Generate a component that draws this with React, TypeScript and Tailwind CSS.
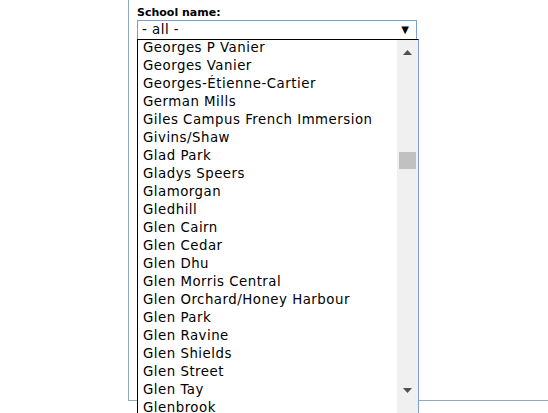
const schools = [
  "Georges P Vanier",
  "Georges Vanier",
  "Georges-Étienne-Cartier",
  "German Mills",
  "Giles Campus French Immersion",
  "Givins/Shaw",
  "Glad Park",
  "Gladys Speers",
  "Glamorgan",
  "Gledhill",
  "Glen Cairn",
  "Glen Cedar",
  "Glen Dhu",
  "Glen Morris Central",
  "Glen Orchard/Honey Harbour",
  "Glen Park",
  "Glen Ravine",
  "Glen Shields",
  "Glen Street",
  "Glen Tay",
  "Glenbrook",
];

const font = { fontFamily: '"DejaVu Sans", Verdana, sans-serif' };

function Arrow({ up }: { up?: boolean }) {
  return (
    <svg width="9" height="5" viewBox="0 0 9 5" className="block">
      <path d={up ? "M0 5 L4.5 0 L9 5 Z" : "M0 0 L9 0 L4.5 5 Z"} fill="#505050" />
    </svg>
  );
}

export default function App() {
  return (
    <div className="relative w-[548px] h-[413px] overflow-hidden bg-white" style={font}>
      <div className="ml-[128px] h-[401px] border-l border-b border-[#8ea9c1] pl-2">
        <label className="block pt-[6px] text-[11px] leading-[14px] font-bold text-black">
          School name:
        </label>
        <div className="flex h-[20px] w-[280px] items-center justify-between border border-[#7b9fd6] pl-[4px] pr-[7px]">
          <span className="text-[13.33px] leading-[16px] tracking-[0.5px] text-black">- all -</span>
          <span className="text-[10px] leading-none text-black">▼</span>
        </div>
      </div>

      {/* open options list */}
      <div className="absolute left-[137px] top-[39px] flex h-[374px] w-[282px] border-l border-t border-r border-black border-r-[#7b9fd6] bg-white">
        <div className="flex-1 overflow-hidden">
          <ul className="-mt-[1px] pl-[5px]">
            {schools.map((s) => (
              <li
                key={s}
                className="h-[18px] text-[13.33px] leading-[18px] tracking-[0.5px] text-black whitespace-nowrap"
              >
                {s}
              </li>
            ))}
          </ul>
        </div>
        <div className="flex w-[21px] flex-col bg-[#f0f0f0] pb-[13px]">
          <div className="flex h-[24px] items-center justify-center">
            <Arrow up />
          </div>
          <div className="flex-1 px-[1px] pt-[88px]">
            <div className="mx-auto h-[17px] w-[17px] bg-[#c1c1c1]" />
          </div>
          <div className="flex h-[20px] items-center justify-center">
            <Arrow />
          </div>
        </div>
      </div>
    </div>
  );
}
